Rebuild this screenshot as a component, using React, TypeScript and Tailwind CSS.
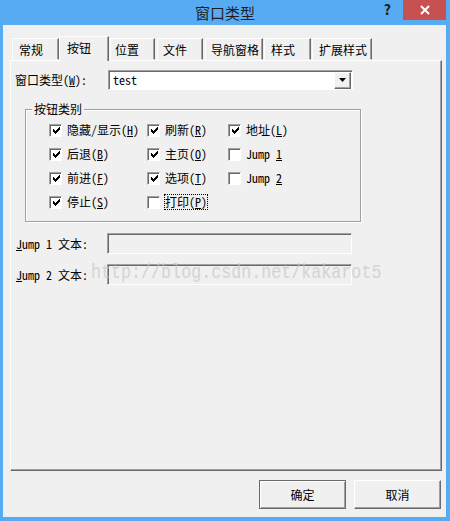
import React from 'react';

const CHECK = ['......#', '.....##', '#...###', '##.###.', '#####..', '.###...', '..#....'];

function CheckBox({ checked }: { checked: boolean }) {
  return (
    <span className="flex h-[13px] w-[13px] shrink-0 items-center justify-center border border-t-[#a0a0a0] border-l-[#a0a0a0] border-r-white border-b-white bg-white shadow-[inset_1px_1px_0_#696969]">
      {checked && (
        <svg width="7" height="7" viewBox="0 0 7 7" shapeRendering="crispEdges" className="ml-px mt-px">
          {CHECK.flatMap((row, y) =>
            row.split('').map((c, x) => (c === '#' ? <rect key={`${x}-${y}`} x={x} y={y} width="1" height="1" fill="#000" /> : null))
          )}
        </svg>
      )}
    </span>
  );
}

function Option({ checked, focus, children }: { checked: boolean; focus?: boolean; children: React.ReactNode }) {
  return (
    <div className="flex h-[24px] items-center gap-[5px]">
      <CheckBox checked={checked} />
      <span className={focus ? 'leading-[14px] outline-1 outline-dotted outline-black' : 'leading-[14px]'}>{children}</span>
    </div>
  );
}

const tabs = [
  { label: '常规', cls: 'w-[47px] h-[22px] pl-[6px]' },
  { label: '按钮', cls: 'w-[50px] h-[25px] pl-[7px] pt-[1px] -mb-px z-10 border-b-0', active: true },
  { label: '位置', cls: 'ml-[1px] w-[45px] h-[22px] pl-[4px]' },
  { label: '文件', cls: 'ml-[2px] w-[46px] h-[22px] pl-[5px]' },
  { label: '导航窗格', cls: 'ml-[2px] w-[58px] h-[22px] pl-[5px]' },
  { label: '样式', cls: 'ml-[1px] w-[47px] h-[22px] pl-[6px]' },
  { label: '扩展样式', cls: 'ml-[1px] w-[60px] h-[22px] pl-[6px]' },
];

export default function App() {
  return (
    <div className="flex h-[521px] w-[450px] flex-col bg-[#56abf3] font-['Noto_Sans_CJK_SC',sans-serif] text-[12px] text-black">
      {/* title bar */}
      <div className="relative flex h-[25px] shrink-0 items-center justify-center">
        <span className="text-[15px] leading-none text-[#1e1e1e]">窗口类型</span>
        <span className="absolute right-[59px] top-[2px] text-[14px] font-bold leading-none text-[#1a1a1a]">?</span>
        <span className="absolute right-[4px] top-0 flex h-[20px] w-[43px] items-center justify-center bg-[#c75050]">
          <svg width="10" height="10" viewBox="0 0 10 10">
            <path d="M1 1L9 9M9 1L1 9" stroke="#fff" strokeWidth="2" />
          </svg>
        </span>
      </div>

      {/* client area */}
      <div className="mb-[4px] ml-[3px] mr-[4px] flex flex-1 flex-col bg-[#f0f0f0]">
        <div className="relative z-10 ml-[9px] mt-[11px] flex h-[24px] items-end">
          {tabs.map((t) => (
            <div
              key={t.label}
              className={`relative box-border flex items-start border border-l-white border-t-white border-r-[#696969] border-b-transparent bg-[#f0f0f0] pt-[3px] leading-[16px] shadow-[inset_-1px_0_0_#a0a0a0] ${t.cls}`}
            >
              {t.label}
            </div>
          ))}
        </div>

        <div className="relative ml-[7px] mr-[4px] h-[411px] border border-l-white border-t-white border-r-[#696969] border-b-[#696969] shadow-[inset_-1px_-1px_0_#a0a0a0] font-['Noto_Sans_Mono_CJK_SC','Noto_Sans_CJK_SC',monospace]">
          {/* window type row */}
          <div className="mt-[9px] flex items-center pl-[4px]">
            <span className="w-[93px] leading-[14px]">
              窗口类型(<u>W</u>):
            </span>
            <div className="flex h-[20px] w-[245px] items-center border border-l-[#a0a0a0] border-t-[#a0a0a0] border-r-white border-b-white bg-white shadow-[inset_1px_1px_0_#696969]">
              <span className="flex-1 pl-[4px] leading-[14px]">test</span>
              <span className="mr-px flex h-[17px] w-[17px] items-center justify-center border border-l-white border-t-white border-r-[#696969] border-b-[#696969] bg-[#f0f0f0] shadow-[inset_-1px_-1px_0_#a0a0a0]">
                <svg width="7" height="4" viewBox="0 0 7 4">
                  <path d="M0 0H7L3.5 4Z" fill="#000" />
                </svg>
              </span>
            </div>
          </div>

          {/* group box */}
          <div className="relative ml-[14px] mt-[19px] w-[336px] border border-[#a0a0a0] pb-[7px] pl-[23px] pt-[8px] shadow-[inset_1px_1px_0_#fff,1px_1px_0_#fff]">
            <span className="absolute -top-[8px] left-[6px] bg-[#f0f0f0] px-[2px] leading-[14px]">按钮类别</span>
            <div className="grid grid-cols-[98px_81px_auto]">
              <Option checked>
                隐藏/显示(<u>H</u>)
              </Option>
              <Option checked>
                刷新(<u>R</u>)
              </Option>
              <Option checked>
                地址(<u>L</u>)
              </Option>
              <Option checked>
                后退(<u>B</u>)
              </Option>
              <Option checked>
                主页(<u>O</u>)
              </Option>
              <Option checked={false}>
                Jump <u>1</u>
              </Option>
              <Option checked>
                前进(<u>F</u>)
              </Option>
              <Option checked>
                选项(<u>T</u>)
              </Option>
              <Option checked={false}>
                Jump <u>2</u>
              </Option>
              <Option checked>
                停止(<u>S</u>)
              </Option>
              <Option checked={false} focus>
                打印(<u>P</u>)
              </Option>
            </div>
          </div>

          {/* jump text rows */}
          <div className="mt-[11px] flex items-center pl-[5px]">
            <span className="w-[91px] leading-[14px]">
              <u>J</u>ump 1 文本:
            </span>
            <div className="h-[21px] w-[245px] border border-l-[#a0a0a0] border-t-[#a0a0a0] border-r-white border-b-white shadow-[inset_1px_1px_0_#696969]" />
          </div>
          <div className="mt-[10px] flex items-center pl-[5px]">
            <span className="w-[91px] leading-[14px]">
              <u>J</u>ump 2 文本:
            </span>
            <div className="h-[21px] w-[245px] border border-l-[#a0a0a0] border-t-[#a0a0a0] border-r-white border-b-white shadow-[inset_1px_1px_0_#696969]" />
          </div>

          {/* watermark */}
          <span className="pointer-events-none absolute left-[80px] top-[199px] origin-top scale-y-125 font-['Liberation_Mono',monospace] text-[16.7px] leading-[20px] text-[#c8c8c8] opacity-70">
            http://blog.csdn.net/kakarot5
          </span>
        </div>

        {/* buttons */}
        <div className="mr-[5px] mt-[9px] flex justify-end gap-[8px]">
          <button className="h-[29px] w-[87px] border border-[#696969] bg-[#f0f0f0] leading-none shadow-[inset_1px_1px_0_#fff,inset_-1px_-1px_0_#a0a0a0]">
            确定
          </button>
          <button className="h-[29px] w-[87px] border border-l-white border-t-white border-r-[#696969] border-b-[#696969] bg-[#f0f0f0] leading-none shadow-[inset_-1px_-1px_0_#a0a0a0]">
            取消
          </button>
        </div>
      </div>
    </div>
  );
}
